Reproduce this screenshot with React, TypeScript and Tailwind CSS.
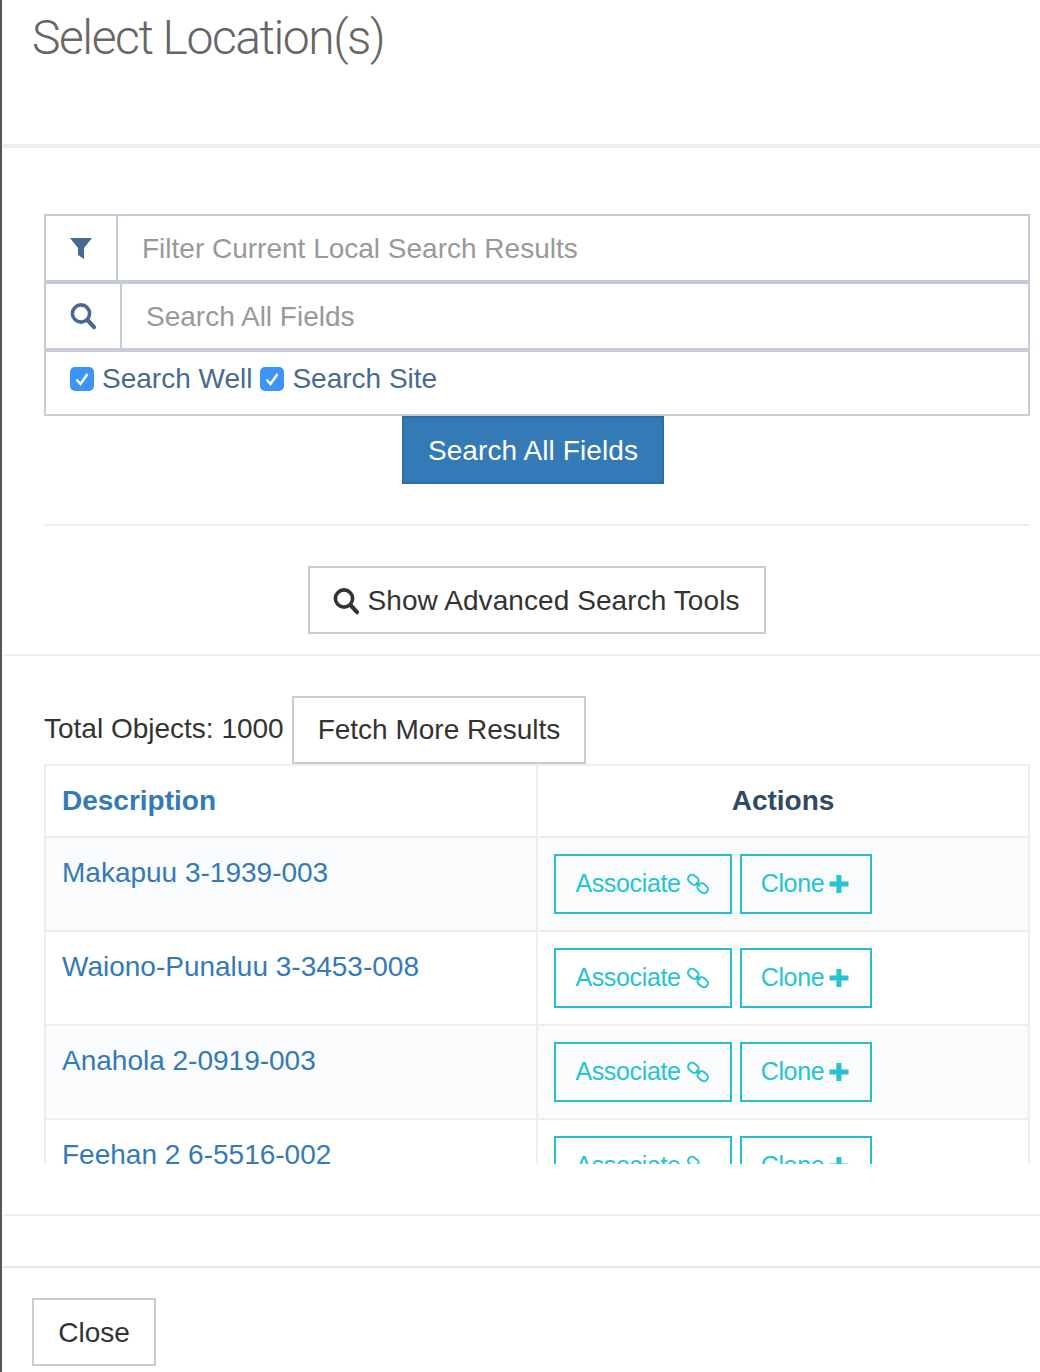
import React from "react";

const font = { fontFamily: '"Liberation Sans", Arial, sans-serif' };

function SearchIcon({ className }: { className: string }) {
  return (
    <svg viewBox="0 0 26 28" className={className} fill="none" stroke="currentColor" strokeWidth="3.6">
      <circle cx="11" cy="11.5" r="8.6" />
      <path d="M17.4 18 L24 25.2" strokeWidth="4.2" strokeLinecap="round" />
    </svg>
  );
}

function LinkIcon() {
  return (
    <svg viewBox="0 0 22 22" className="w-[22px] h-[22px] shrink-0" fill="none" stroke="currentColor" strokeWidth="2">
      <rect x="0.8" y="2.8" width="11" height="8" rx="3.8" transform="rotate(40 6.3 6.800)" />
      <rect x="10.200" y="11.200" width="11" height="8" rx="3.8" transform="rotate(40 15.700 15.200)" />
      <path d="M9 9.200 L13 13" />
    </svg>
  );
}

function PlusIcon() {
  return (
    <svg viewBox="0 0 20 20" className="w-[20px] h-[20px] shrink-0" fill="currentColor">
      <path d="M7.4 1h5v6.6H19.500v5H12.400V19h-5V12.600H.5v-5h6.900z" />
    </svg>
  );
}

function Check() {
  return (
    <span className="w-6 h-6 rounded-[5px] bg-[#3b94f6] flex items-center justify-center shrink-0">
      <svg viewBox="0 0 24 24" className="w-6 h-6" fill="none" stroke="#fff" strokeWidth="2.4">
        <path d="M6.500 12.500 L10.500 17 L17.500 7" />
      </svg>
    </span>
  );
}

const rows = [
  { name: "Makapuu 3-1939-003", bg: "bg-[#f9fbfd]" },
  { name: "Waiono-Punaluu 3-3453-008", bg: "bg-white" },
  { name: "Anahola 2-0919-003", bg: "bg-[#f9fbfd]" },
  { name: "Feehan 2 6-5516-002", bg: "bg-white" },
];

export default function App() {
  return (
    <div style={font} className="w-[1040px] h-[1372px] overflow-hidden bg-white border-l-2 border-[#555] text-[28px] text-[#333]">
      <header className="h-[148px] border-b-4 border-[#eceef2] ml-px">
        <h1 className="pl-[29px] pt-[9px] text-[48px] leading-[58px] font-light text-[#666] tracking-[-1.45px] font-['Roboto',sans-serif]">Select Location(s)</h1>
      </header>

      <section className="pt-[66px] pl-[42px] pr-[10px]">
        <div className="h-[68px] flex border-2 border-[#c3cbd9] border-l-[#c8cbd2]">
          <div className="w-[72px] border-r-2 border-[#c3cbd9] flex items-center justify-center">
            <svg viewBox="0 0 24 24" className="w-[24px] h-[24px] text-[#486a92]" fill="currentColor">
              <path d="M1 2h22L15 12v11l-6-4v-7z" />
            </svg>
          </div>
          <div className="flex-1 flex items-center pl-[24px] pt-px text-[#999]">Filter Current Local Search Results</div>
        </div>
        <div className="h-[68px] flex border-2 border-[#c3cbd9] border-l-[#c8cbd2]">
          <div className="w-[76px] border-r-2 border-[#c3cbd9] flex items-center justify-center">
            <SearchIcon className="w-[26px] h-[28px] text-[#486a92]" />
          </div>
          <div className="flex-1 flex items-center pl-[24px] pt-px text-[#999]">Search All Fields</div>
        </div>
        <div className="h-[66px] border-2 border-[#ccced6] pt-[10px] pl-[24px] text-[#486a8f]">
          <span className="flex items-center h-[34px]">
            <Check />
            <span className="ml-[8px] mr-[8px]">Search Well</span>
            <Check />
            <span className="ml-[8px]">Search Site</span>
          </span>
        </div>
        <div className="flex justify-center pr-[8px]">
          <button className="w-[262px] h-[68px] pt-px bg-[#337ab7] border-2 border-[#2e6da4] text-white tracking-[0.1px]">Search All Fields</button>
        </div>
        <div className="h-[2px] bg-[#eee] mt-[40px]" />
        <div className="flex justify-center mt-[40px] pr-px">
          <button className="w-[458px] h-[68px] pt-px border-2 border-[#ccc] flex items-center justify-center gap-[8px] tracking-[0.08px]">
            <SearchIcon className="w-[26px] h-[28px] text-[#333]" />
            Show Advanced Search Tools
          </button>
        </div>
      </section>

      <div className="h-[2px] bg-[#eef0f5] mt-[20px] ml-px" />

      <section className="pt-[40px] pl-[42px] pr-[10px]">
        <div className="flex items-start h-[68px]">
          <span className="pt-[12px] w-[248px] text-[#333]">Total Objects: 1000</span>
          <button className="w-[294px] h-[68px] border-2 border-[#ccc]">Fetch More Results</button>
        </div>
        <div className="h-[400px] overflow-hidden">
          <table className="w-full border-collapse table-fixed border-2 border-[#eee]">
            <thead>
              <tr className="h-[72px]">
                <th className="w-1/2 text-left pl-[16px] border-r-2 border-[#eee] text-[#337ab7] font-bold">Description</th>
                <th className="text-center text-[#2f4a63] font-bold">Actions</th>
              </tr>
            </thead>
            <tbody>
              {rows.map((r) => (
                <tr key={r.name} className={`${r.bg} h-[94px] border-t-2 border-[#eee]`}>
                  <td className="align-top pl-[16px] pt-[14px] border-r-2 border-[#eee] text-[#337ab7]">{r.name}</td>
                  <td className="align-top pl-[16px] pt-[16px]">
                    <div className="flex gap-[8px] text-[#26c3d4] text-[25px] tracking-[-0.35px]">
                      <span className="w-[178px] h-[60px] border-2 border-[#26bccb] flex items-center justify-center gap-[6px] pr-[2px]">
                        Associate <LinkIcon />
                      </span>
                      <span className="w-[132px] h-[60px] border-2 border-[#26bccb] flex items-center justify-center gap-[5px] pr-[2px]">
                        Clone <PlusIcon />
                      </span>
                    </div>
                  </td>
                </tr>
              ))}
            </tbody>
          </table>
        </div>
      </section>

      <div className="h-[2px] bg-[#eceef2] mt-[50px] ml-px" />
      <div className="h-[2px] bg-[#e8e8e8] mt-[50px]" />
      <footer className="pt-[30px] pl-[30px]">
        <button className="w-[124px] h-[68px] pt-px border-2 border-[#ccc]">Close</button>
      </footer>
    </div>
  );
}
